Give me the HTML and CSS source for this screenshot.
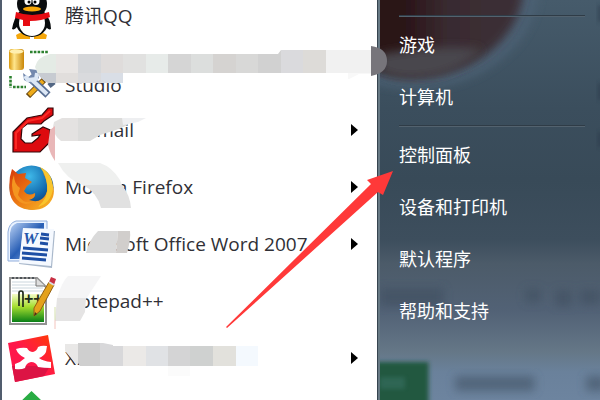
FILE: index.html
```html
<!DOCTYPE html>
<html lang="zh-CN">

<head>
    <meta charset="utf-8">
    <title>开始菜单</title>
    <link rel="stylesheet" href="styles.css">
</head>

<body>
    <main class="start-menu">
        <nav class="programs">
            <a class="program" href="#">
                <svg class="icon" viewBox="0 0 49 49">
                    <path d="M9 43q5-4 14-1v5H10zM40 43q-5-4-13-1v5h12z" fill="#f5a70b" />
                    <path d="M12 20Q7 26 5 37q3 2 7-5h25q4 7 7 5 0-10-7-17z" fill="#080b0c" />
                    <ellipse cx="25" cy="30" rx="16" ry="15" fill="#080b0c" />
                    <ellipse cx="25" cy="31" rx="13" ry="13" fill="#fff" />
                    <ellipse cx="25" cy="12" rx="15" ry="14" fill="#0a0d0e" />
                    <ellipse cx="21" cy="9" rx="3.500" ry="4" fill="#fff" />
                    <ellipse cx="29" cy="9" rx="3.500" ry="4" fill="#fff" />
                    <circle cx="22" cy="10" r="1.5" />
                    <circle cx="28" cy="10" r="1.5" />
                    <ellipse cx="25" cy="17" rx="9" ry="2.5" fill="#f8a808" />
                    <path d="M9 20q16 6 33 0l1 5q-8 4-20 4v5h-7v-6l-8-2z" fill="#e60b12" />
                </svg>
                <span class="name">腾讯QQ</span>
            </a>
            <a class="program" href="#">
                <svg class="icon" viewBox="0 0 49 49">
                    <defs>
                        <linearGradient id="drum">
                            <stop stop-color="#d9980c" />
                            <stop offset=".35" stop-color="#ffe68c" />
                            <stop offset="1" stop-color="#c98607" />
                        </linearGradient>
                    </defs>
                    <rect x="2" y="0" width="15" height="21" rx="3" fill="url(#drum)" />
                    <ellipse cx="9.500" cy="2.500" rx="7" ry="2" fill="#ffefb0" />
                    <path d="M23 3h18M3.500 27v12M6 38h13" fill="none" stroke="#2c812f" stroke-width="2.600" stroke-dasharray="2.600 1.200" />
                    <path d="M37 31L21 47" stroke="#6b4b13" stroke-width="6" />
                    <path d="M36 32L22 46" stroke="#edaa1a" stroke-width="4" />
                    <path d="M47 33l-5 4" stroke="#536784" stroke-width="5" />
                    <path d="M22 28l19 18" stroke="#596f93" stroke-width="7.500" />
                    <path d="M16 24l1 7 8 4 7-6-2-8-8-1 3 6-4 2z" fill="#7388ad" />
                    <path d="M18 27l3 4 8-1 1-6M24 30l16 15" fill="none" stroke="#dce7f5" stroke-width="4" />
                </svg>
                <span class="name">Microsoft Visual<br>Studio</span>
            </a>
            <a class="program has-menu" href="#">
                <svg class="icon" viewBox="0 0 49 49">
                    <path d="M46 2v7l-9 6-3 3H20l-5 4-1 11 4 4h7l6-5 2-3-8 1v-2l11-7 7 3v12L33 46H6V26l6-6 8-8 15-3 6-7z" fill="#dd0b0f" stroke="#34080a" stroke-width="1.200" />
                    <path d="M9 43V27l12-12 14-3 8-7" fill="none" stroke="#fb2a25" stroke-width="2" />
                </svg>
                <span class="name">Foxmail</span>
            </a>
            <a class="program has-menu" href="#">
                <svg class="icon" viewBox="0 0 49 49">
                    <defs>
                        <linearGradient id="fox" x2="1" y2="1">
                            <stop stop-color="#d63a0a" />
                            <stop offset=".5" stop-color="#ec7913" />
                            <stop offset="1" stop-color="#f9be28" />
                        </linearGradient>
                        <radialGradient id="globe" cx=".45" cy=".25" r=".75">
                            <stop stop-color="#3fb9e9" />
                            <stop offset=".6" stop-color="#1269ad" />
                            <stop offset="1" stop-color="#0c2e68" />
                        </radialGradient>
                    </defs>
                    <circle cx="24.500" cy="24.500" r="22" fill="url(#globe)" />
                    <path d="M5 6l6 5 8-1-1 5 7 4-5 4-3 5q4 6 11 2 1 5-6 7 12 4 17-6 4-9-3-21 14 11 10 24-5 13-21 13Q7 46 3 31 1 17 5 6z" fill="url(#fox)" />
                    <path d="M33 4q13 6 13 22-2 14-15 18 11-10 9-22-1-10-7-18z" fill="#f8c52e" />
                    <path d="M7 12q0 9 6 13l-2 7q5 9 15 7-12 6-19-7-4-11 0-20z" fill="#f49620" />
                </svg>
                <span class="name">Mozilla Firefox</span>
            </a>
            <a class="program has-menu" href="#">
                <svg class="icon" viewBox="0 0 49 49">
                    <defs>
                        <linearGradient id="word" x2="1" y2="1">
                            <stop stop-color="#b9d1f4" />
                            <stop offset=".5" stop-color="#285eb5" />
                            <stop offset="1" stop-color="#9bbae6" />
                        </linearGradient>
                    </defs>
                    <path d="M9 1h31v40H1V12Q2 3 9 1z" fill="#e9f2ff" stroke="#91aedc" />
                    <path d="M10 3h27v6H16l-3 30H3V13q1-8 7-10z" fill="url(#word)" />
                    <path d="M17 9l31 2-3 37-33-4z" fill="#a9b8cb" />
                    <path d="M16 8l31 1-3 37-32-3z" fill="#f5f9ff" />
                    <text class="word-letter" x="16" y="24">W</text>
                    <path d="M34 14l8 1M33 18l9 1M33 23l8 1M16 28l25 2M15 33l25 2M15 38l24 2" stroke="#1e4fa5" stroke-width="2.800" />
                </svg>
                <span class="name">Microsoft Office Word 2007</span>
            </a>
            <a class="program" href="#">
                <svg class="icon" viewBox="0 0 49 49">
                    <defs>
                        <linearGradient id="note" x2="0" y2="1">
                            <stop stop-color="#f4fbc9" />
                            <stop offset=".45" stop-color="#a6de2f" />
                            <stop offset="1" stop-color="#087f16" />
                        </linearGradient>
                    </defs>
                    <path d="M3 1h27l9 9v37H3z" fill="#fff" stroke="#929292" stroke-width="2" />
                    <path d="M5 5h23M5 8h24M5 11h31M5 14h32" stroke="#cbd6dd" />
                    <path d="M5 1h24" stroke="#4e5358" stroke-width="2" stroke-dasharray="2 2" />
                    <path d="M5 17h32v28H5z" fill="url(#note)" />
                    <path d="M29 1v8h9" fill="#dedede" stroke="#777" />
                    <path d="M12 29V16q0-2 2-2t2 2v14" fill="none" stroke="#202b1b" stroke-width="1.700" />
                    <text class="plus-sign" x="17" y="27">++</text>
                    <path d="M42 5l5 3-14 26-6 5 0-8z" fill="#e4a11b" stroke="#936011" />
                    <path d="M42 5l2-5 5 2-2 6z" fill="#c83044" />
                    <path d="M42 5l5 3" stroke="#d9dce0" stroke-width="2" />
                    <path d="M27 39l1-4 2 2z" fill="#443118" />
                </svg>
                <span class="name">Notepad++</span>
            </a>
            <a class="program has-menu" href="#">
                <svg class="icon" viewBox="0 0 49 49">
                    <defs>
                        <linearGradient id="mind" x1="1" x2="0" y2="1">
                            <stop stop-color="#ff3d00" />
                            <stop offset=".5" stop-color="#ff174a" />
                            <stop offset="1" stop-color="#ff174a" />
                        </linearGradient>
                    </defs>
                    <path d="M1 9l40-8 7 39-40 8z" fill="url(#mind)" />
                    <path d="M5 32h38l-6 10-29 6z" fill="#dc1444" />
                    <path d="M9 15q6-2 11-1 2 4 6 4 4-1 5-5 4-2 9-1l-1 6q-2 4-7 6 4 3 12 4v6q-7 0-13-1-2-5-7-5-5 1-6 6-4 2-10 1v-5q6-2 10-6-7-3-9-9z" fill="#fff" />
                </svg>
                <span class="name">XMind</span>
            </a>
            <a class="program" href="#" aria-label="360">
                <svg class="icon" viewBox="0 0 49 49">
                    <path d="M24.500 0l20 19H34v24H15V19H5z" fill="#29ac43" />
                </svg>
            </a>
        </nav>

        <nav class="places">
            <svg class="backdrop" viewBox="0 0 222 400" preserveAspectRatio="none">
                <defs>
                    <filter id="soft" x="-20%" y="-50%" width="140%" height="200%">
                        <feGaussianBlur stdDeviation="5" />
                    </filter>
                    <filter id="edge" x="-20%" y="-20%" width="140%" height="140%">
                        <feGaussianBlur stdDeviation="2" />
                    </filter>
                    <linearGradient id="ball">
                        <stop stop-color="#2c1018" />
                        <stop offset=".45" stop-color="#2a1318" />
                        <stop offset=".65" stop-color="#392b30" />
                        <stop offset="1" stop-color="#3c3038" />
                    </linearGradient>
                </defs>
                <ellipse cx="35" cy="-15" rx="125" ry="103" fill="#4b6073" filter="url(#soft)" />
                <ellipse cx="35" cy="-15" rx="110" ry="92" fill="url(#ball)" filter="url(#soft)" />
                <path d="M0 54q60-10 103-5-25 26-64 29-25 2-39-7z" fill="#4a474d" filter="url(#soft)" />
                <path d="M0 288h64v18H0zM147 289h15v13h-15zM177 290h16v16h-16zM202 290h20v14h-20z" fill="#414f60" opacity=".65" filter="url(#soft)" />
                <path d="M-5 362h54v45H-5z" fill="#21583f" filter="url(#edge)" />
                <path d="M0 377h25v12H0z" fill="#397062" opacity=".6" filter="url(#edge)" />
                <path d="M76 376h80v15H76zM208 376h20v15h-20z" fill="#4e6074" opacity=".85" filter="url(#soft)" />
                <path d="M220 5h6v17h-6zM220 83h6v17h-6zM220 132h6v15h-6z" fill="#273646" opacity=".5" filter="url(#edge)" />
            </svg>
            <hr>
            <a class="place" href="#">游戏</a>
            <a class="place" href="#">计算机</a>
            <hr>
            <a class="place" href="#">控制面板</a>
            <a class="place" href="#">设备和打印机</a>
            <a class="place" href="#">默认程序</a>
            <a class="place" href="#">帮助和支持</a>
        </nav>

        <!-- mosaic strokes and the pointer arrow, over both columns -->
        <svg class="marks" viewBox="0 0 600 400">
            <defs>
                <clipPath id="band">
                    <path d="M35 67q2-10 15-13h228l3-4h90v24h-12l-10 5h-23v-6H123v10H48q-9-4-13-16z" />
                </clipPath>
            </defs>
            <g clip-path="url(#band)" shape-rendering="crispEdges">
                <path d="M34 50h22v23H34z" fill="#e4ebe5" />
                <path d="M56 50h22v23H56z" fill="#e9e6e4" />
                <path d="M78 50h23v23H78z" fill="#d5d7da" />
                <path d="M101 50h22v23h-22z" fill="#dfdcdb" />
                <path d="M123 50h23v23h-23z" fill="#e1e1e0" />
                <path d="M146 50h22v23h-22z" fill="#e7ebe9" />
                <path d="M168 50h23v23h-23z" fill="#d5d5d5" />
                <path d="M191 50h22v23h-22z" fill="#dcdedd" />
                <path d="M213 50h23v23h-23z" fill="#d5d3d1" />
                <path d="M236 50h22v23h-22z" fill="#d8d8d7" />
                <path d="M258 50h23v23h-23z" fill="#d1d1d1" />
                <path d="M281 50h22v23h-22z" fill="#dadadd" />
                <path d="M303 50h23v23h-23z" fill="#dddbd8" />
                <path d="M326 50h45v23h-45z" fill="#f1f1f1" />
                <path d="M348 73h23v8h-23z" fill="#f8f8f8" />
                <path d="M34 73h22v10H34z" fill="#c7cbd1" />
                <path d="M56 73h22v10H56z" fill="#e1dedc" />
                <path d="M78 73h23v10H78z" fill="#d9dadd" />
                <path d="M101 73h22v10h-22z" fill="#d9dee6" />
            </g>
            <path d="M371 46q16 2 16 15 0 12-16 15z" fill="#77757b" />

            <path d="M54 122l8-4h16v23H61q-7-5-8-14z" fill="#e4e2e1" />
            <path d="M78 118h45l5 7-12 5-16 5-10 6H78z" fill="#dcdcdb" />
            <path d="M122 118h24l-8 4-15 3z" fill="#eeeff1" />
            <path d="M50 130l5-4v35q-5-7-7-16z" fill="#e9b7b8" />
            <path d="M58 163h42q12 4 20 17l2 5H83q-16-5-25-22z" fill="#eff0ef" />
            <path d="M83 185h39q8 10 9 23h-30q-4-16-18-23z" fill="#e1e1e1" />

            <path d="M98 231h20l-2 22H86q3-13 12-22z" fill="#dadada" />
            <path d="M118 231h12q1 8-3 22h-11z" fill="#d1cecc" />

            <path d="M68 276h33l-15 23H57q4-16 11-23z" fill="#f5f5f6" />
            <path d="M57 298h29l-1 14-5 9H55z" fill="#e5e4e4" />
            <path d="M55 307v13" stroke="#d5e0ad" />
            <path d="M55 320v9" stroke="#f3c4bd" />

            <path d="M65 344h13v20h-2l-11-13z" fill="#e9e8e7" />
            <path d="M78 343h22v23H80l-2-3z" fill="#cfcfcf" />
            <path d="M100 343h3l10 2v1h10v20h-23z" fill="#d8d8da" />
            <path d="M123 346h23v20h-23z" fill="#ebe9e7" />
            <path d="M146 346h22v20h-22z" fill="#e0e2e5" />
            <path d="M168 346h22v20h-22z" fill="#d4d4d5" />
            <path d="M190 346h23v20h-23z" fill="#cfd1d0" />
            <path d="M213 346h23v20h-23z" fill="#e2e1dc" />
            <path d="M236 346h22v20h-22z" fill="#f4f9fe" />
            <path d="M168 366h22v10h-22z" fill="#fbfbfb" />

            <path d="M226 327l145-143-4-4 26-9-10 24-5-3-151 136z" fill="#ff3939" />
        </svg>
    </main>
</body>

</html>
```

FILE: styles.css
```css
body {
    margin: 0;
    font-family: "Open Sans", "Noto Sans CJK SC", sans-serif;
    font-size: 18px;
}

a {
    text-decoration: none;
}

.start-menu {
    position: relative;
    display: grid;
    grid-template-columns: 63fr 37fr;
    grid-template-rows: minmax(0, 1fr);
    height: 100vh;
    overflow: hidden;
}

.programs {
    box-sizing: border-box;
    min-width: 0;
    padding-left: 5px;
    border-left: 2px solid #515d6e;
    border-right: 1px solid #37444f;
    background: #fff;
}

.program {
    display: flex;
    align-items: center;
    gap: 9px;
    height: 57px;
    padding-right: 19px;
    color: #303036;
    font-size: 19px;
    line-height: 24px;
}

.program:first-child {
    margin-top: -13px;
}

.icon {
    flex: none;
    width: 49px;
    height: 49px;
    margin-top: 2px;
}

.word-letter {
    font: italic bold 17px "Liberation Serif", serif;
    fill: #2456aa;
}

.plus-sign {
    font: bold 16px "Liberation Sans", sans-serif;
    fill: #202b1b;
}

.has-menu::after {
    content: "";
    margin-left: auto;
    border-left: 7px solid #000;
    border-top: 6px solid transparent;
    border-bottom: 6px solid transparent;
}

.places {
    position: relative;
    box-sizing: border-box;
    min-width: 0;
    padding: 12px 15px 0 19px;
    border-left: 2px solid #677984;
    background: linear-gradient(#465b6b, #3b4e5d 27%, #384a58 45%, #3d4e5d 60%, #4c5b69 66%, #526276 78%, #657787 88%, #6a819b 93%, #6d849f);
    overflow: hidden;
}

.backdrop {
    position: absolute;
    inset: 0;
    width: 100%;
    height: 100%;
}

.places hr {
    position: relative;
    height: 1px;
    margin: 3px 0 1px;
    border: 0;
    border-top: 1px solid #2f3c47;
    background: #53626e;
}

.place {
    position: relative;
    display: flex;
    align-items: center;
    box-sizing: border-box;
    height: 52px;
    padding-bottom: 1px;
    color: #fff;
}

.marks {
    position: absolute;
    top: 0;
    left: 0;
    width: 100%;
    pointer-events: none;
}
```
